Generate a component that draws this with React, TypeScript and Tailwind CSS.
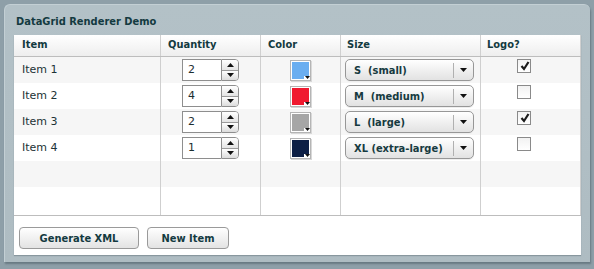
import React from "react";

const rows = [
  { name: "Item 1", qty: "2", color: "#6aaef0", size: "S  (small)", logo: true },
  { name: "Item 2", qty: "4", color: "#f01a30", size: "M  (medium)", logo: false },
  { name: "Item 3", qty: "2", color: "#a6a6a6", size: "L  (large)", logo: true },
  { name: "Item 4", qty: "1", color: "#0d1f45", size: "XL (extra-large)", logo: false },
];

const boldFont = "font-['DejaVu_Sans_Condensed','DejaVu_Sans',sans-serif] font-bold";

function Stepper({ value }: { value: string }) {
  return (
    <div className="flex h-[22px]">
      <div className="w-[39px] h-[22px] bg-white border border-[#8e8e8e] border-r-0 pl-[5px] flex items-center text-[11px] text-[#1c2e30]">
        {value}
      </div>
      <div className="w-[18px] h-[22px] flex flex-col border border-[#8e8e8e] rounded-r-[4px] overflow-hidden">
        <div className="flex-1 flex items-center justify-center bg-gradient-to-b from-white to-[#e4e4e4] border-b border-[#9a9a9a]">
          <svg width="7" height="4" viewBox="0 0 7 4"><path d="M3.5 0 L7 4 L0 4 Z" fill="#111" /></svg>
        </div>
        <div className="flex-1 flex items-center justify-center bg-gradient-to-b from-white to-[#dcdcdc]">
          <svg width="7" height="4" viewBox="0 0 7 4"><path d="M0 0 L7 0 L3.5 4 Z" fill="#111" /></svg>
        </div>
      </div>
    </div>
  );
}

function Swatch({ color }: { color: string }) {
  return (
    <div className="relative w-[21px] h-[21px] border border-[#b5b5b5] bg-white p-[1px] shadow-[1px_1px_0_#d8d8d8]">
      <div className="w-full h-full" style={{ background: color }} />
      <div className="absolute right-0 bottom-0 w-[6px] h-[4px] bg-white flex items-center justify-center">
        <svg width="5" height="3" viewBox="0 0 5 3"><path d="M0 0 L5 0 L2.5 3 Z" fill="#111" /></svg>
      </div>
    </div>
  );
}

function Combo({ label }: { label: string }) {
  return (
    <div className="w-[129px] h-[22px] rounded-[5px] border border-[#979797] bg-gradient-to-b from-white to-[#e2e2e2] flex items-center shadow-[0_1px_0_#eeeeee]">
      <div className={`w-[107px] pl-[8px] text-[11px] ${boldFont} text-[#163a40] whitespace-pre leading-none overflow-hidden`}>{label}</div>
      <div className="w-px h-[15px] bg-[#b0b0b0]" />
      <div className="flex-1 flex items-center justify-center">
        <svg width="7" height="4" viewBox="0 0 7 4"><path d="M0 0 L7 0 L3.5 4 Z" fill="#111" /></svg>
      </div>
    </div>
  );
}

function Check({ checked }: { checked: boolean }) {
  return (
    <div className="w-[14px] h-[14px] border border-[#8a8a8a] bg-gradient-to-b from-[#f2f2f2] to-white relative">
      {checked && (
        <svg className="absolute left-[1px] top-[0px]" width="12" height="12" viewBox="0 0 12 12">
          <path d="M2.5 6 L5 9 L9.5 2" stroke="#1a1a1a" strokeWidth="2.2" fill="none" />
        </svg>
      )}
    </div>
  );
}

const cols = ["w-[147px]", "w-[100px]", "w-[80px]", "w-[140px]", "w-[100px]"];

export default function App() {
  return (
    <div className="w-[594px] h-[269px] bg-[#8e9fa8] pt-[4px] pl-[4px] font-['DejaVu_Sans',sans-serif] overflow-hidden">
      <div className="w-[586px] h-[258px] bg-gradient-to-b from-[#b3c1c7] to-[#aebcc2] rounded-t-[6px] border-t border-l border-[#c3cfd4] shadow-[1px_2px_2px_rgba(60,75,85,0.45)]">
        <div className={`h-[30px] pl-[11px] pt-[10px] text-[11px] ${boldFont} text-[#133a40] leading-[13px]`}>
          DataGrid Renderer Demo
        </div>
        <div className="ml-[9px] w-[567px] h-[220px] bg-white flex flex-col shadow-[0_1px_1px_rgba(80,95,105,0.4)]">
          <div className="flex h-[22px] bg-gradient-to-b from-white to-[#eeeeee] border-b border-[#bdbdbd]">
            {["Item", "Quantity", "Color", "Size", "Logo?"].map((h, i) => (
              <div
                key={h}
                className={`${cols[i]} ${i === 0 ? "pl-[8px]" : i >= 3 ? "pl-[6px]" : "pl-[7px]"} border-r border-[#d0d0d0] flex items-center text-[11px] ${boldFont} text-[#133a40]`}
              >
                {h}
              </div>
            ))}
          </div>
          {rows.map((r, idx) => (
            <div key={r.name} className={`flex h-[26px] ${idx % 2 === 0 ? "bg-[#f6f6f6]" : "bg-white"}`}>
              <div className={`${cols[0]} pl-[8px] border-r border-[#cfcfcf] flex items-center text-[11px] text-[#1c3336]`}>{r.name}</div>
              <div className={`${cols[1]} pl-[21px] border-r border-[#cfcfcf] flex items-center`}>
                <Stepper value={r.qty} />
              </div>
              <div className={`${cols[2]} pl-[29px] border-r border-[#cfcfcf] flex items-center`}>
                <Swatch color={r.color} />
              </div>
              <div className={`${cols[3]} pl-[4px] border-r border-[#cfcfcf] flex items-center`}>
                <Combo label={r.size} />
              </div>
              <div className={`${cols[4]} pl-[36px] pt-[2px] border-r border-[#cfcfcf] flex items-start`}>
                <Check checked={r.logo} />
              </div>
            </div>
          ))}
          <div className="flex h-[26px] bg-[#f6f6f6]">
            {cols.map((c) => (
              <div key={c} className={`${c} border-r border-[#cfcfcf]`} />
            ))}
          </div>
          <div className="flex h-[29px] bg-white border-b border-[#bdbdbd]">
            {cols.map((c) => (
              <div key={c} className={`${c} border-r border-[#cfcfcf]`} />
            ))}
          </div>
          <div className="flex gap-[8px] pl-[5px] pt-[11px]">
            <button className={`w-[120px] h-[22px] rounded-[4px] border border-[#9a9a9a] bg-gradient-to-b from-white to-[#e3e3e3] text-[11px] ${boldFont} text-[#133a40] leading-none`}>
              Generate XML
            </button>
            <button className={`w-[82px] h-[22px] rounded-[4px] border border-[#9a9a9a] bg-gradient-to-b from-white to-[#e3e3e3] text-[11px] ${boldFont} text-[#133a40] leading-none`}>
              New Item
            </button>
          </div>
        </div>
      </div>
    </div>
  );
}
